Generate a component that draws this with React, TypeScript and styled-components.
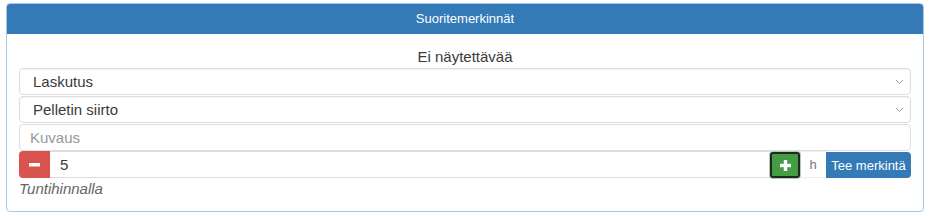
import React from "react";
import styled, { createGlobalStyle } from "styled-components";

const GlobalStyle = createGlobalStyle`
  html, body {
    margin: 0;
    padding: 0;
    background: #fff;
    font-family: "Liberation Sans", Arial, sans-serif;
    color: #333;
  }
  * { box-sizing: border-box; }
`;

const Page = styled.div`
  padding: 3px 13px 4px 6px;
`;

const Panel = styled.div`
  border: 1px solid #a9c8e6;
  border-radius: 4px;
  height: 209px;
  overflow: hidden;
`;

const Heading = styled.div`
  background: #337ab7;
  color: #fff;
  font-size: 13px;
  height: 31px;
  display: flex;
  align-items: center;
  justify-content: center;
  margin: -1px -1px 0;
  border-radius: 3px 3px 0 0;
`;

const Body = styled.div`
  padding: 12px 12px 0;
  display: flex;
  flex-direction: column;
`;

const Empty = styled.div`
  text-align: center;
  font-size: 15px;
  line-height: 21px;
  margin-bottom: 1px;
  color: #3a3a3a;
`;

const SelectBox = styled.div`
  height: 27px;
  border: 1px solid #ddd;
  border-radius: 4px;
  display: flex;
  align-items: center;
  justify-content: space-between;
  padding: 0 6px 0 13px;
  font-size: 15px;
  color: #3a3a3a;
  box-shadow: inset 0 1px 1px rgba(0, 0, 0, 0.05);
  margin-bottom: 1px;
`;

const Chevron = () => (
  <svg width="9" height="6" viewBox="0 0 9 6">
    <path d="M1 1l3.5 3.5L8 1" fill="none" stroke="#999" strokeWidth="0.9" />
  </svg>
);

const TextInput = styled.div`
  height: 27px;
  border: 1px solid #ddd;
  border-radius: 4px;
  display: flex;
  align-items: center;
  padding: 0 10px;
  font-size: 15px;
  color: #999;
`;

const Group = styled.div`
  display: flex;
  height: 27px;
`;

const IconButton = styled.div<{ $color: string; $focus?: boolean }>`
  width: ${(p) => (p.$focus ? "30px" : "31px")};
  background: ${(p) => p.$color};
  display: flex;
  align-items: center;
  justify-content: center;
  border-radius: ${(p) => (p.$focus ? "3px" : "4px 0 0 4px")};
  ${(p) =>
    p.$focus
      ? `border: 2px solid #1f2a1f; box-shadow: 0 0 0 1px #b8c8b8; margin: 1px 0 0;`
      : ""}
`;

const Amount = styled.div`
  flex: 1;
  border: 1px solid #ddd;
  border-left: none;
  border-right: none;
  display: flex;
  align-items: center;
  padding: 0 10px;
  font-size: 15px;
  color: #3a3a3a;
`;

const Unit = styled.div`
  width: 26px;
  display: flex;
  align-items: center;
  justify-content: center;
  font-size: 13px;
  color: #777;
  border-top: 1px solid #eee;
  border-bottom: 1px solid #eee;
`;

const Submit = styled.div`
  width: 85px;
  background: #337ab7;
  color: #fff;
  font-size: 13px;
  display: flex;
  align-items: center;
  justify-content: center;
  border-radius: 0 4px 4px 0;
  margin-top: 1px;
`;

const Note = styled.div`
  font-style: italic;
  color: #666;
  font-size: 15px;
  line-height: 22px;
`;

const Minus = () => (
  <svg width="11" height="4" viewBox="0 0 11 4">
    <rect width="11" height="3.5" fill="#fff" />
  </svg>
);

const Plus = () => (
  <svg width="11" height="11" viewBox="0 0 11 11">
    <rect x="3.8" width="3.4" height="11" fill="#fff" />
    <rect y="3.8" width="11" height="3.4" fill="#fff" />
  </svg>
);

const App = () => {
  return (
    <>
      <GlobalStyle />
      <Page>
        <Panel>
          <Heading>Suoritemerkinnät</Heading>
          <Body>
            <Empty>Ei näytettävää</Empty>
            <SelectBox>
              Laskutus
              <Chevron />
            </SelectBox>
            <SelectBox>
              Pelletin siirto
              <Chevron />
            </SelectBox>
            <TextInput>Kuvaus</TextInput>
            <Group>
              <IconButton $color="#d9534f">
                <Minus />
              </IconButton>
              <Amount>5</Amount>
              <IconButton $color="#449d44" $focus>
                <Plus />
              </IconButton>
              <Unit>h</Unit>
              <Submit>Tee merkintä</Submit>
            </Group>
            <Note>Tuntihinnalla</Note>
          </Body>
        </Panel>
      </Page>
    </>
  );
};

export default App;
